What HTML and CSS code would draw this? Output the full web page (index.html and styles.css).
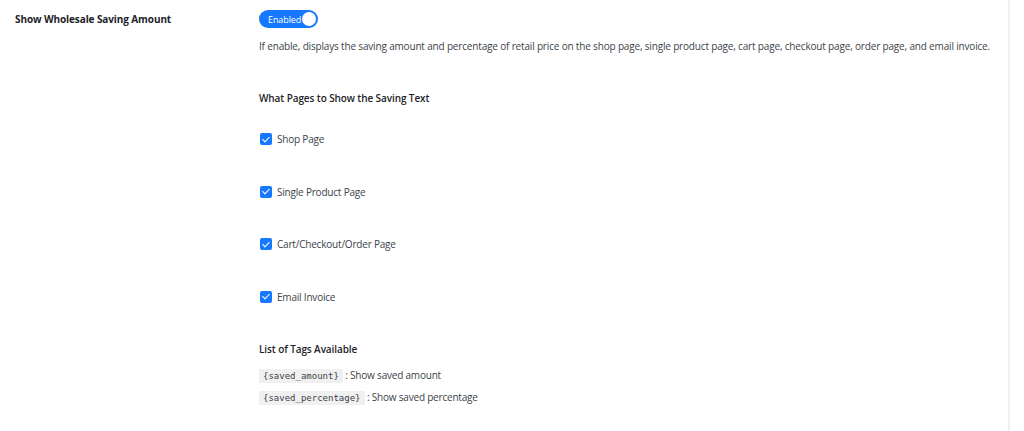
FILE: index.html
```html
<!DOCTYPE html>
<html lang="en">
<head>
    <meta charset="UTF-8">
    <meta name="viewport" content="width=device-width, initial-scale=1.0">
    <title>Wholesale Saving Amount</title>
    <link rel="stylesheet" href="styles.css">
</head>
<body>
    <div class="panel">
        <div class="setting-row">
            <!-- label column -->
            <div class="setting-label">Show Wholesale Saving Amount</div>
            <!-- control column -->
            <div class="setting-control">
                <button class="switch on">
                    <span class="switch-text">Enabled</span>
                    <span class="switch-knob"></span>
                </button>
                <p class="desc">If enable, displays the saving amount and percentage of retail price on the shop page, single product page, cart page, checkout page, order page, and email invoice.</p>

                <h4 class="sub-title">What Pages to Show the Saving Text</h4>
                <ul class="check-list">
                    <li class="check-item"><span class="check-box"></span>Shop Page</li>
                    <li class="check-item"><span class="check-box"></span>Single Product Page</li>
                    <li class="check-item"><span class="check-box"></span>Cart/Checkout/Order Page</li>
                    <li class="check-item"><span class="check-box"></span>Email Invoice</li>
                </ul>

                <h4 class="sub-title tags-title">List of Tags Available</h4>
                <div class="tag-row"><code>{saved_amount}</code> : Show saved amount</div>
                <div class="tag-row"><code>{saved_percentage}</code> : Show saved percentage</div>
            </div>
        </div>
    </div>
</body>
</html>
```

FILE: styles.css
```css
*{
    margin: 0;
    padding: 0;
    box-sizing: border-box;
}
body{
    background: #fff;
    font-family: "Open Sans", "Noto Sans", sans-serif;
    font-size: 10px;
    letter-spacing: -0.2px;
    color: #333;
}
.panel{
    width: 1010px;
    height: 431px;
    border-right: 2px solid #f0f0f0;
}
.setting-row{
    display: flex;
    padding-top: 10px;
}
.setting-label{
    width: 259px;
    padding-left: 15px;
    padding-top: 2px;
    font-weight: 700;
    font-size: 10px;
    letter-spacing: -0.1px;
    color: #1d2327;
}
.setting-control{
    flex: 1;
}
.switch{
    display: flex;
    align-items: center;
    width: 59px;
    height: 18px;
    border: none;
    border-radius: 9px;
    background: #1677ff;
    padding: 0 2px 0 9px;
    justify-content: space-between;
    font-family: inherit;
}
.switch-text{
    color: #fff;
    font-size: 9px;
    letter-spacing: -0.1px;
}
.switch-knob{
    width: 14px;
    height: 14px;
    border-radius: 50%;
    background: #fff;
}
.desc{
    margin-top: 9px;
    line-height: 18px;
    letter-spacing: -0.17px;
    color: #3c434a;
}
.sub-title{
    margin-top: 34px;
    font-size: 10px;
    font-weight: 600;
    letter-spacing: -0.1px;
    color: #1d2327;
    line-height: 18px;
}
.check-list{
    list-style: none;
    margin-top: 23px;
}
.check-item{
    display: flex;
    align-items: center;
    height: 18px;
    margin-bottom: 34.5px;
    color: #3c434a;
}
.check-box{
    position: relative;
    width: 12px;
    height: 12px;
    margin: 0 5px 0 1px;
    border-radius: 2px;
    background: #1677ff;
}
.check-box::after{
    content: "";
    position: absolute;
    left: 4px;
    top: 1.5px;
    width: 3px;
    height: 6px;
    border: solid #fff;
    border-width: 0 1.5px 1.5px 0;
    transform: rotate(45deg);
}
.tags-title{
    margin-top: 0;
}
.tag-row{
    margin-top: 3px;
    line-height: 18px;
    color: #3c434a;
}
.tags-title + .tag-row{
    margin-top: 8px;
}
code{
    font-family: "DejaVu Sans Mono", "Liberation Mono", monospace;
    font-size: 9px;
    letter-spacing: 0;
    background: #f0f0f1;
    padding: 2px 4px;
    margin-right: 0;
    color: #3c434a;
}
```
